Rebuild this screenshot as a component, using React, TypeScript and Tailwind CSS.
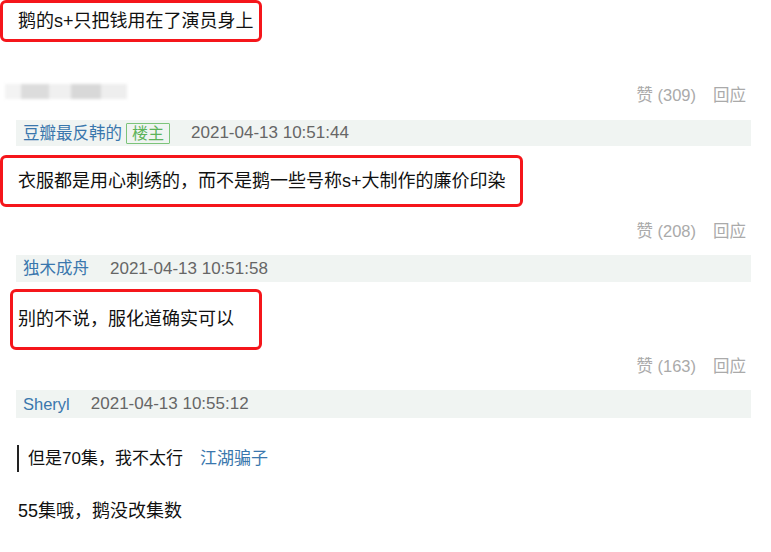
import React from "react";

const FONT = {
  fontFamily:
    '"Liberation Sans", Arial, "Noto Sans CJK SC", "Microsoft YaHei", sans-serif',
};

function RedBox({
  children,
  className,
}: {
  children: React.ReactNode;
  className: string;
}) {
  return (
    <div
      className={`flex items-center border-[3px] border-[#f5161b] rounded-[6px] text-[18px] text-[#111] ${className}`}
    >
      {children}
    </div>
  );
}

function Votes({ count }: { count: number }) {
  return (
    <div className="flex items-center gap-[17px] text-[16.5px] text-[#aaa] leading-[24px]">
      <span>赞 ({count})</span>
      <span>回应</span>
    </div>
  );
}

function HeaderBar({
  name,
  date,
  owner,
  className,
}: {
  name: string;
  date: string;
  owner?: boolean;
  className: string;
}) {
  return (
    <div
      className={`ml-[16px] w-[735px] flex items-center pl-[7px] bg-[#f0f4f2] ${className}`}
    >
      <span className="text-[16.5px] text-[#3a77ad]">{name}</span>
      {owner && (
        <span className="ml-[4px] border border-[#7cc47a] text-[#5cb35a] text-[16px] leading-[19px] px-[5px] rounded-[1px]">
          楼主
        </span>
      )}
      <span className="ml-[21px] text-[17px] text-[#666]">{date}</span>
    </div>
  );
}

export default function App() {
  return (
    <div
      className="w-[771px] h-[552px] bg-white overflow-hidden flex flex-col"
      style={FONT}
    >
      <RedBox className="w-[262px] h-[42px] pl-[15px]">
        鹅的s+只把钱用在了演员身上
      </RedBox>

      <div className="mt-[41px] h-[24px] flex justify-between pr-[25px]">
        <div className="ml-[5px] mt-[1px] h-[15px] w-[122px] flex blur-[1.5px]">
          <div className="w-[16px] bg-[#f3f3f3]" />
          <div className="w-[28px] bg-[#dcdcdc]" />
          <div className="w-[22px] bg-[#f0f0f0]" />
          <div className="w-[30px] bg-[#d8d8d8]" />
          <div className="w-[26px] bg-[#eeeeee]" />
        </div>
        <Votes count={309} />
      </div>

      <HeaderBar
        name="豆瓣最反韩的"
        date="2021-04-13 10:51:44"
        owner
        className="mt-[13px] h-[26px]"
      />

      <RedBox className="mt-[9px] w-[523px] h-[52px] pl-[15px]">
        衣服都是用心刺绣的，而不是鹅一些号称s+大制作的廉价印染
      </RedBox>

      <div className="mt-[12px] flex justify-end pr-[25px]">
        <Votes count={208} />
      </div>

      <HeaderBar
        name="独木成舟"
        date="2021-04-13 10:51:58"
        className="mt-[12px] h-[27px]"
      />

      <RedBox className="mt-[7px] ml-[10px] w-[252px] h-[61px] pl-[5px]">
        别的不说，服化道确实可以
      </RedBox>

      <div className="mt-[4px] flex justify-end pr-[25px]">
        <Votes count={163} />
      </div>

      <HeaderBar
        name="Sheryl"
        date="2021-04-13 10:55:12"
        className="mt-[12px] h-[28px]"
      />

      <div className="mt-[27px] ml-[17px] h-[27px] flex items-center border-l-2 border-[#222] pl-[9px] text-[17px] text-[#111]">
        <span>但是70集，我不太行</span>
        <span className="ml-[17px] text-[#3a77ad]">江湖骗子</span>
      </div>

      <div className="mt-[27px] ml-[18px] h-[24px] flex items-center text-[18px] text-[#111]">
        55集哦，鹅没改集数
      </div>
    </div>
  );
}
